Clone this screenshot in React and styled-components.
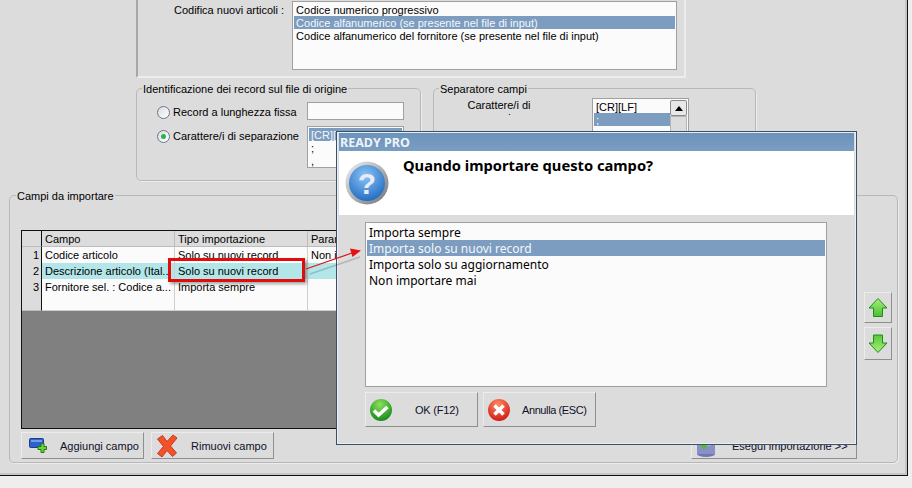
import React from 'react';
import styled, { createGlobalStyle } from 'styled-components';

const GlobalStyle = createGlobalStyle`
  html, body {
    margin: 0;
    padding: 0;
    background: #eeeeee;
    overflow: hidden;
  }
  body {
    font-family: "Liberation Sans", "Noto Sans", sans-serif;
    font-size: 11px;
    color: #000;
  }
`;

const Stage = styled.div`
  position: relative;
  width: 912px;
  height: 488px;
  overflow: hidden;
`;

const Window = styled.div`
  box-sizing: border-box;
  width: 908px;
  height: 476px;
  background: #dcdcdc;
  border-right: 1px solid #111;
  border-bottom: 1px solid #111;
  box-shadow: inset -2px -2px 0 #c6c6c6;
`;

const TopPanel = styled.div`
  display: flex;
  box-sizing: border-box;
  margin-left: 136px;
  width: 550px;
  height: 78px;
  padding: 1px 7px 0 36px;
  gap: 4px;
  border: 2px solid #c4c4c4;
  border-top: 0;
  border-right-color: #ececec;
  border-bottom-color: #ececec;
  border-left-color: #a8a8a8;
`;

const TopLabel = styled.div`
  width: 115px;
  padding-top: 3px;
  line-height: 13px;
  white-space: nowrap;
`;

const ListBox = styled.div`
  box-sizing: border-box;
  background: #fbfbfb;
  border: 1px solid #a0a0a0;
  padding: 1px;
  width: ${p => p.$w};
  height: ${p => p.$h};
  position: relative;
  overflow: hidden;
  font-family: ${p => p.$font || 'inherit'};
  font-size: ${p => p.$size || '11px'};
`;

const ListRow = styled.div`
  height: ${p => p.$rh || 13}px;
  line-height: ${p => (p.$rh || 13) + 2}px;
  padding-left: 2px;
  white-space: nowrap;
  background: ${p => (p.$selected ? '#7c9dc0' : 'transparent')};
  color: ${p => (p.$selected ? '#f4f7fa' : '#000')};
`;

const GroupRow = styled.div`
  display: flex;
  margin: 4px 0 0 136px;
  gap: 12px;
`;

const Group = styled.fieldset`
  box-sizing: border-box;
  margin: 0;
  min-width: 0;
  width: ${p => p.$w};
  height: ${p => p.$h};
  padding: 0;
  border: 1px solid #b8b8b8;
  border-radius: 5px;
  box-shadow: 1px 1px 0 #ececec;
`;

const Legend = styled.legend`
  margin-left: ${p => p.$ml || '5px'};
  padding: 0 1px;
  height: 13px;
  line-height: 15px;
  white-space: nowrap;
`;

const RecordGrid = styled.div`
  display: grid;
  grid-template-columns: 150px 97px;
  grid-template-rows: 18px 42px;
  row-gap: 6px;
  margin: 7px 0 0 20px;
`;

const RadioLine = styled.label`
  box-sizing: border-box;
  display: flex;
  align-items: center;
  gap: 3px;
  height: 18px;
  padding-top: 2px;
  white-space: nowrap;
`;

const Radio = styled.span`
  box-sizing: border-box;
  display: flex;
  align-items: center;
  justify-content: center;
  width: 13px;
  height: 13px;
  border: 1px solid #67788a;
  border-radius: 50%;
  background: linear-gradient(135deg, #d8dce0, #ffffff);
  &::after {
    content: '';
    width: 5px;
    height: 5px;
    border-radius: 50%;
    background: ${p => (p.$checked ? '#2eb24a' : 'transparent')};
  }
`;

const InputBox = styled.div`
  box-sizing: border-box;
  background: #fbfbfb;
  border: 1px solid #a0a0a0;
  height: 18px;
`;

const SepBody = styled.div`
  display: flex;
  margin: 3px 0 0 33px;
`;

const SepLabel = styled.div`
  width: 64px;
  margin: 1px 61px 0 0;
  height: 17px;
  overflow: hidden;
  line-height: 13px;
  text-align: center;
`;

const ScrollTrack = styled.div`
  position: absolute;
  top: 1px;
  right: 1px;
  width: 17px;
  height: 40px;
  background: #f2f2f2;
`;

const ScrollUp = styled.div`
  box-sizing: border-box;
  height: 16px;
  border: 1px solid #8c8c8c;
  border-radius: 2px;
  background: #e8e8e8;
  display: flex;
  align-items: center;
  justify-content: center;
  &::after {
    content: '';
    border-left: 4px solid transparent;
    border-right: 4px solid transparent;
    border-bottom: 5px solid #000;
  }
`;

const ScrollThumb = styled.div`
  height: 24px;
  background: #dcdcdc;
  border: 1px solid #b4b4b4;
  box-sizing: border-box;
`;

const FieldsGroup = styled(Group)`
  margin: 8px 0 0 9px;
`;

const FieldsBody = styled.div`
  display: flex;
  margin: 28px 0 0 11px;
  gap: 7px;
`;

const DataGrid = styled.div`
  box-sizing: border-box;
  display: flex;
  flex-direction: column;
  width: 836px;
  height: 199px;
  background: #808080;
  border: 1px solid #111;
`;

const GridRow = styled.div`
  display: grid;
  grid-template-columns: 20px 133px 133px 1fr;
  height: 16px;
  background: ${p => (p.$active ? '#b3e6e8' : p.$head ? '#dcdcdc' : '#fbfbfb')};
`;

const GridCell = styled.div`
  box-sizing: border-box;
  padding: 0 0 0 3px;
  line-height: 17px;
  border-right: 1px solid ${p => (p.$head ? '#bcbcbc' : '#cfcfcf')};
  border-bottom: 1px solid ${p => (p.$head ? '#bcbcbc' : '#cfcfcf')};
  white-space: nowrap;
  overflow: hidden;
`;

const NumCell = styled.div`
  box-sizing: border-box;
  padding-right: 2px;
  text-align: right;
  line-height: 17px;
  background: #dcdcdc;
  border-right: 1px solid #111;
  border-bottom: 1px solid #bcbcbc;
`;

const SideButtons = styled.div`
  display: flex;
  flex-direction: column;
  gap: 4px;
  padding-top: 62px;
`;

const Button = styled.div`
  box-sizing: border-box;
  display: flex;
  align-items: center;
  width: ${p => p.$w};
  height: ${p => p.$h || '27px'};
  padding-left: ${p => p.$pad || '6px'};
  background: #dcdcdc;
  border: 1px solid;
  border-color: #ececec #8f8f8f #8f8f8f #ececec;
  white-space: nowrap;
  color: #101028;
`;

const ButtonLabel = styled.span`
  margin-left: ${p => p.$gap};
  letter-spacing: ${p => p.$track || 'normal'};
`;

const Toolbar = styled.div`
  display: flex;
  gap: 7px;
  width: 836px;
  margin: 3px 0 0 11px;
`;

const ToolbarEnd = styled.div`
  margin-left: auto;
`;

const Marker = styled.div`
  position: absolute;
  left: 168px;
  top: 258px;
  box-sizing: border-box;
  width: 137px;
  height: 24px;
  border: 3px solid #e00d0d;
  box-shadow: 2px 2px 3px rgba(0, 0, 0, 0.35);
`;

const Arrow = styled.svg`
  position: absolute;
  left: 300px;
  top: 244px;
  z-index: 3;
`;

const Dialog = styled.div`
  position: absolute;
  left: 336px;
  top: 131px;
  box-sizing: border-box;
  display: flex;
  flex-direction: column;
  width: 521px;
  height: 314px;
  background: #dcdcdc;
  border: 1px solid #3c4f66;
  outline: 1px solid #e8eef2;
  outline-offset: -2px;
  padding: 1px 2px;
`;

const TitleBar = styled.div`
  height: 18px;
  padding-left: 1px;
  line-height: 19px;
  background: linear-gradient(#6a93bb, #7b9dc2);
  color: #eef3f8;
  font-family: "Noto Sans", sans-serif;
  font-weight: 700;
  font-size: 12.500px;
`;

const Heading = styled.div`
  box-sizing: border-box;
  display: flex;
  height: 64px;
  background: #fff;
  padding: 6px 0 0 6px;
  gap: 14px;
`;

const HelpWrap = styled.div`
  margin-top: 4px;
  height: 44px;
`;

const Question = styled.div`
  font-family: "Noto Sans", sans-serif;
  font-size: 14.700px;
  font-weight: 700;
  line-height: 16px;
`;

const DialogBody = styled.div`
  display: flex;
  flex-direction: column;
  padding: 7px 0 0 26px;
`;

const DialogButtons = styled.div`
  display: flex;
  gap: 5px;
  margin-top: 5px;
`;

const CheckIcon = () => (
  <svg width="24" height="24" viewBox="0 0 24 24">
    <defs>
      <radialGradient id="okG" cx="45%" cy="25%" r="80%">
        <stop offset="0" stopColor="#8ee05a" />
        <stop offset="1" stopColor="#0e8418" />
      </radialGradient>
    </defs>
    <circle cx="12" cy="12" r="11" fill="url(#okG)" />
    <path d="M5 12.500l4.500 4.500 9-8" fill="none" stroke="#fff" strokeWidth="3.500" />
  </svg>
);

const CancelIcon = () => (
  <svg width="24" height="24" viewBox="0 0 24 24">
    <defs>
      <radialGradient id="noG" cx="45%" cy="25%" r="80%">
        <stop offset="0" stopColor="#ff8a60" />
        <stop offset="1" stopColor="#cf1212" />
      </radialGradient>
    </defs>
    <circle cx="12" cy="12" r="11" fill="url(#noG)" />
    <path d="M7.500 7.500l9 9m0-9l-9 9" stroke="#fff" strokeWidth="3.500" />
  </svg>
);

const AddIcon = () => (
  <svg width="18" height="15" viewBox="0 0 18 15">
    <rect x="0.500" y="0.500" width="14" height="9" rx="1" fill="#2f62c8" stroke="#1c3c8c" />
    <rect x="2" y="2" width="11" height="2" fill="#6c9cf0" />
    <path d="M12 5.500h3v3h2.500v3H15v3h-3v-3H9v-3h3z" fill="#6fd23a" stroke="#1f7a12" />
  </svg>
);

const RemoveIcon = () => (
  <svg width="22" height="23" viewBox="0 0 22 23">
    <path
      d="M1.500 5l5-3.500 4.500 6 6-6.500 4 3-6.500 8 6 7-4 3.500-5.500-6-5 6.500-4.500-3.500 6-7z"
      fill="#f4502a"
      stroke="#c43a20"
      strokeLinejoin="round"
    />
  </svg>
);

const ImportIcon = () => (
  <svg width="20" height="22" viewBox="0 0 20 22">
    <ellipse cx="10" cy="19" rx="9" ry="3" fill="#7078b0" />
    <rect x="1" y="8" width="18" height="11" fill="#8890c4" />
    <ellipse cx="10" cy="8" rx="9" ry="3" fill="#b0b8dc" />
    <path d="M3 8h10l-5 7z" fill="#48c030" />
  </svg>
);

const GreenArrow = ({ down }) => (
  <svg width="20" height="20" viewBox="0 0 20 20">
    <defs>
      <linearGradient id={down ? 'arD' : 'arU'} x1="0" y1="0" x2="0" y2="1">
        <stop offset="0" stopColor={down ? '#58c838' : '#a8f078'} />
        <stop offset="1" stopColor={down ? '#a8f078' : '#48c030'} />
      </linearGradient>
    </defs>
    <path
      d={down ? 'M5.500 1h9v8h4.500l-9 9.500-9-9.500h4.500z' : 'M10 .5l9 9.500h-4.500v8.500h-9V10H1z'}
      fill={`url(#${down ? 'arD' : 'arU'})`}
      stroke="#1e8c1e"
    />
  </svg>
);

const HelpIcon = () => (
  <svg width="44" height="44" viewBox="0 0 44 44">
    <defs>
      <radialGradient id="helpG" cx="45%" cy="30%" r="75%">
        <stop offset="0" stopColor="#8cc4f4" />
        <stop offset="1" stopColor="#1c68c0" />
      </radialGradient>
      <linearGradient id="ringG" x1="0" y1="0" x2="1" y2="1">
        <stop offset="0" stopColor="#f0f0f0" />
        <stop offset="1" stopColor="#707478" />
      </linearGradient>
    </defs>
    <circle cx="22" cy="22" r="21.500" fill="url(#ringG)" />
    <circle cx="22" cy="22" r="18" fill="url(#helpG)" />
    <text
      x="22"
      y="33"
      textAnchor="middle"
      fontFamily="Liberation Sans, sans-serif"
      fontWeight="700"
      fontSize="30"
      fill="#e6ecfa"
    >
      ?
    </text>
  </svg>
);

const CodingOptions = [
  'Codice numerico progressivo',
  'Codice alfanumerico (se presente nel file di input)',
  'Codice alfanumerico del fornitore (se presente nel file di input)',
];

const Rows = [
  ['1', 'Codice articolo', 'Solo su nuovi record', 'Non importare'],
  ['2', 'Descrizione articolo (Ital...', 'Solo su nuovi record', ''],
  ['3', 'Fornitore sel. : Codice a...', 'Importa sempre', ''],
  ['', '', '', ''],
];

const Choices = [
  'Importa sempre',
  'Importa solo su nuovi record',
  'Importa solo su aggiornamento',
  'Non importare mai',
];

export default function App() {
  return (
    <Stage>
      <GlobalStyle />
      <Window>
        <TopPanel>
          <TopLabel>Codifica nuovi articoli :</TopLabel>
          <ListBox $w="388px" $h="69px">
            {CodingOptions.map((o, i) => (
              <ListRow key={o} $selected={i === 1}>
                {o}
              </ListRow>
            ))}
          </ListBox>
        </TopPanel>

        <GroupRow>
          <Group $w="285px" $h="99px">
            <Legend>Identificazione dei record sul file di origine</Legend>
            <RecordGrid>
              <RadioLine>
                <Radio />
                Record a lunghezza fissa
              </RadioLine>
              <InputBox />
              <RadioLine>
                <Radio $checked />
                Carattere/i di separazione
              </RadioLine>
              <ListBox $w="97px" $h="42px">
                <ListRow $selected>[CR][LF]</ListRow>
                <ListRow>;</ListRow>
                <ListRow>,</ListRow>
              </ListBox>
            </RecordGrid>
          </Group>
          <Group $w="323px" $h="97px">
            <Legend>Separatore campi</Legend>
            <SepBody>
              <SepLabel>
                Carattere/i di
                <br />
                separazione
              </SepLabel>
              <ListBox $w="97px" $h="42px">
                <ListRow>[CR][LF]</ListRow>
                <ListRow $selected>;</ListRow>
                <ScrollTrack>
                  <ScrollUp />
                  <ScrollThumb />
                </ScrollTrack>
              </ListBox>
            </SepBody>
          </Group>
        </GroupRow>

        <FieldsGroup $w="889px" $h="274px">
          <Legend $ml="6px">Campi da importare</Legend>
          <FieldsBody>
            <DataGrid>
              <GridRow $head>
                <NumCell />
                <GridCell $head>Campo</GridCell>
                <GridCell $head>Tipo importazione</GridCell>
                <GridCell $head>Parametri</GridCell>
              </GridRow>
              {Rows.map((r, i) => (
                <GridRow key={i} $active={i === 1}>
                  <NumCell>{r[0]}</NumCell>
                  <GridCell>{r[1]}</GridCell>
                  <GridCell>{r[2]}</GridCell>
                  <GridCell>{r[3]}</GridCell>
                </GridRow>
              ))}
            </DataGrid>
            <SideButtons>
              <Button $w="28px" $h="31px" $pad="3px">
                <GreenArrow />
              </Button>
              <Button $w="28px" $h="33px" $pad="3px">
                <GreenArrow down />
              </Button>
            </SideButtons>
          </FieldsBody>
          <Toolbar>
            <Button $w="123px" $pad="7px">
              <AddIcon />
              <ButtonLabel $gap="13px">Aggiungi campo</ButtonLabel>
            </Button>
            <Button $w="123px" $pad="4px">
              <RemoveIcon />
              <ButtonLabel $gap="13px">Rimuovi campo</ButtonLabel>
            </Button>
            <ToolbarEnd>
              <Button $w="166px" $pad="4px">
                <ImportIcon />
                <ButtonLabel $gap="16px">Esegui importazione &gt;&gt;</ButtonLabel>
              </Button>
            </ToolbarEnd>
          </Toolbar>
        </FieldsGroup>
      </Window>

      <Marker />
      <Arrow width="70" height="32" viewBox="0 0 70 32">
        <path d="M8 27L58 10" stroke="rgba(0,0,0,0.18)" strokeWidth="1.500" transform="translate(2 3)" />
        <path d="M6 25L52 9" stroke="#e81010" strokeWidth="1.200" />
        <path d="M61 6.500L50 4.500l2.500 8.500z" fill="#e81010" />
      </Arrow>

      <Dialog>
        <TitleBar>READY PRO</TitleBar>
        <Heading>
          <HelpWrap>
            <HelpIcon />
          </HelpWrap>
          <Question>Quando importare questo campo?</Question>
        </Heading>
        <DialogBody>
          <ListBox $w="462px" $h="165px" $size="12px" $font='"Noto Sans", sans-serif'>
            {Choices.map((c, i) => (
              <ListRow key={c} $selected={i === 1} $rh={16}>
                {c}
              </ListRow>
            ))}
          </ListBox>
          <DialogButtons>
            <Button $w="113px" $h="35px" $pad="3px">
              <CheckIcon />
              <ButtonLabel $gap="22px" $track="-0.2px">OK (F12)</ButtonLabel>
            </Button>
            <Button $w="113px" $h="35px" $pad="3px">
              <CancelIcon />
              <ButtonLabel $gap="11px" $track="-0.4px">Annulla (ESC)</ButtonLabel>
            </Button>
          </DialogButtons>
        </DialogBody>
      </Dialog>
    </Stage>
  );
}
